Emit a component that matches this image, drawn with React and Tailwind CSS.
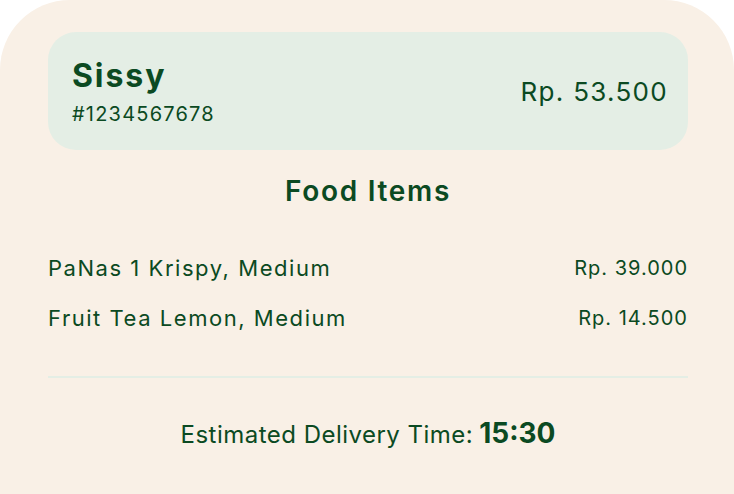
const items = [
  { name: 'PaNas 1 Krispy, Medium', price: 'Rp. 39.000' },
  { name: 'Fruit Tea Lemon, Medium', price: 'Rp. 14.500' },
];

export default function App() {
  return (
    <div className="min-h-screen bg-white font-['Inter',sans-serif] text-[#0b4a22]">
      <div className="min-h-[494px] rounded-t-[70px] bg-[#f9f0e6] pl-12 pr-[46px] pt-8">
        <div className="flex h-[118px] items-center justify-between rounded-[28px] bg-[#e4eee5] pl-6 pr-5">
          <div className="flex flex-col gap-1.5">
            <span className="text-[32px] font-bold leading-[40px] tracking-[0.06em]">Sissy</span>
            <span className="text-[20px] leading-[24px] tracking-[0.06em]">#1234567678</span>
          </div>
          <span className="text-[26px] tracking-[0.05em]">Rp. 53.500</span>
        </div>

        <h2 className="mt-6 text-center text-[28px] font-semibold leading-[34px] tracking-[0.06em]">Food Items</h2>

        <div className="mt-[46px] flex flex-col gap-[22px]">
          {items.map((it) => (
            <div key={it.name} className="flex items-center justify-between">
              <span className="text-[22px] leading-[28px] tracking-[0.07em]">{it.name}</span>
              <span className="text-[20px] leading-[28px] tracking-[0.05em]">{it.price}</span>
            </div>
          ))}
        </div>

        <div className="mt-[44px] h-[2px] bg-[#e4eee5]" />

        <div className="mt-[34px] flex items-baseline justify-center gap-1.5">
          <span className="text-[24px] tracking-[0.02em]">Estimated Delivery Time:</span>
          <span className="text-[28px] font-bold">15:30</span>
        </div>
      </div>
    </div>
  );
}
